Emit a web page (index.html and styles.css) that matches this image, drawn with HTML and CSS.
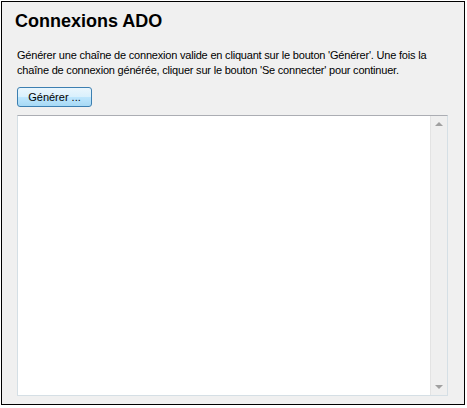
FILE: index.html
```html
<!DOCTYPE html>
<html lang="fr">
<head>
  <meta charset="UTF-8">
  <title>Connexions ADO</title>
  <link rel="stylesheet" href="styles.css">
</head>
<body>
  <div class="frame">
    <h1 class="title">Connexions ADO</h1>
    <p class="intro">Générer une chaîne de connexion valide en cliquant sur le bouton 'Générer'. Une fois la chaîne de connexion générée, cliquer sur le bouton 'Se connecter' pour continuer.</p>
    <button class="btn">Générer ...</button>
    <div class="box">
      <div class="box-text"></div>
      <div class="scroll">
        <span class="arrow up"></span>
        <span class="arrow down"></span>
      </div>
    </div>
  </div>
</body>
</html>
```

FILE: styles.css
```css
html, body { margin:0;padding:0;background:#fff }
body { padding:1px 0 0 1px;font-family:"Liberation Sans", Arial, sans-serif }
.frame { width:462px;height:402px;border:1px solid #000;background:#f0f0f0;display:flex;flex-direction:column }
.title { margin:8px 0 0 13px;font-size:18px;font-weight:bold;line-height:22px;color:#000 }
.intro { margin:16px 14px 0 15px;font-size:11px;letter-spacing:-0.2px;line-height:15px;color:#000 }
.btn { align-self:flex-start;margin:9px 0 0 15px;width:75px;height:20px;padding:0;font:11px "Liberation Sans", Arial, sans-serif;color:#000;border:1px solid #3c7fb1;border-radius:3px;background:linear-gradient(#eaf6fd, #d9f0fc 50%, #bee6fd 51%, #a7d9f5) }
.box { margin:8px 0 0 15px;width:429px;height:279px;border:1px solid #d5dfe5;border-top-color:#abadb3;background:#fff;display:flex }
.box-text { flex:1 }
.scroll { width:16px;background:#efefef;border-left:1px solid #e3e3e3;display:flex;flex-direction:column;justify-content:space-between;align-items:center;padding:6px 0 }
.arrow { width:0;height:0;border-left:4px solid transparent;border-right:4px solid transparent }
.arrow.up { border-bottom:4px solid #a0a0a0 }
.arrow.down { border-top:4px solid #a0a0a0 }
```
